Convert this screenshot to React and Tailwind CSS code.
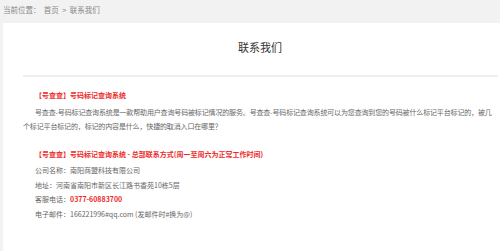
export default function App() {
    const font = { fontFamily: '"Noto Sans CJK SC", "Noto Sans", sans-serif' };

    return (
        <div className="min-h-[251px] bg-[#f2f2f2] pl-[3px] text-[7px] text-[#666]" style={font}>
            {/* 面包屑 */}
            <div className="h-[23px] pt-[1px] text-[7.5px] leading-[18px] text-[#888]">
                当前位置：&nbsp;&nbsp;首页&nbsp;&nbsp;&gt;&nbsp;&nbsp;联系我们
            </div>

            <div className="min-h-[228px] bg-white pl-[20px]">
                <h2 className="pt-[16px] pr-[3px] text-center text-[11px] leading-[16px] text-[#333]">联系我们</h2>
                <div className="mt-[20px] mr-[2px] border-t-2 border-[#eeeeee]" />

                {/* 系统介绍 */}
                <p className="mt-[11px] pl-[12px] font-bold leading-[14px] text-[#ee2a2a]">【号查查】号码标记查询系统</p>
                <p className="mt-[3px] pr-[6px] indent-[12px] leading-[14px] tracking-[-0.15px]">
                    号查查-号码标记查询系统是一款帮助用户查询号码被标记情况的服务。号查查-号码标记查询系统可以为您查询到您的号码被什么标记平台标记的，被几个标记平台标记的，标记的内容是什么，快捷的取消入口在哪里？
                </p>

                {/* 联系方式 */}
                <p className="mt-[14px] pl-[12px] font-bold leading-[14px] text-[#ee2a2a]">
                    【号查查】号码标记查询系统 - 总部联系方式(周一至周六为正常工作时间)
                </p>
                <ul className="mt-[2px] pl-[12px] leading-[14.5px]">
                    <li>公司名称：南阳商盟科技有限公司</li>
                    <li>地址：河南省南阳市新区长江路书香苑10栋5层</li>
                    <li>
                        客服电话：<span className="font-bold text-[#ee2a2a]">0377-60883700</span>
                    </li>
                    <li>电子邮件：166221996#qq.com (发邮件时#换为@)</li>
                </ul>
            </div>
        </div>
    );
}
